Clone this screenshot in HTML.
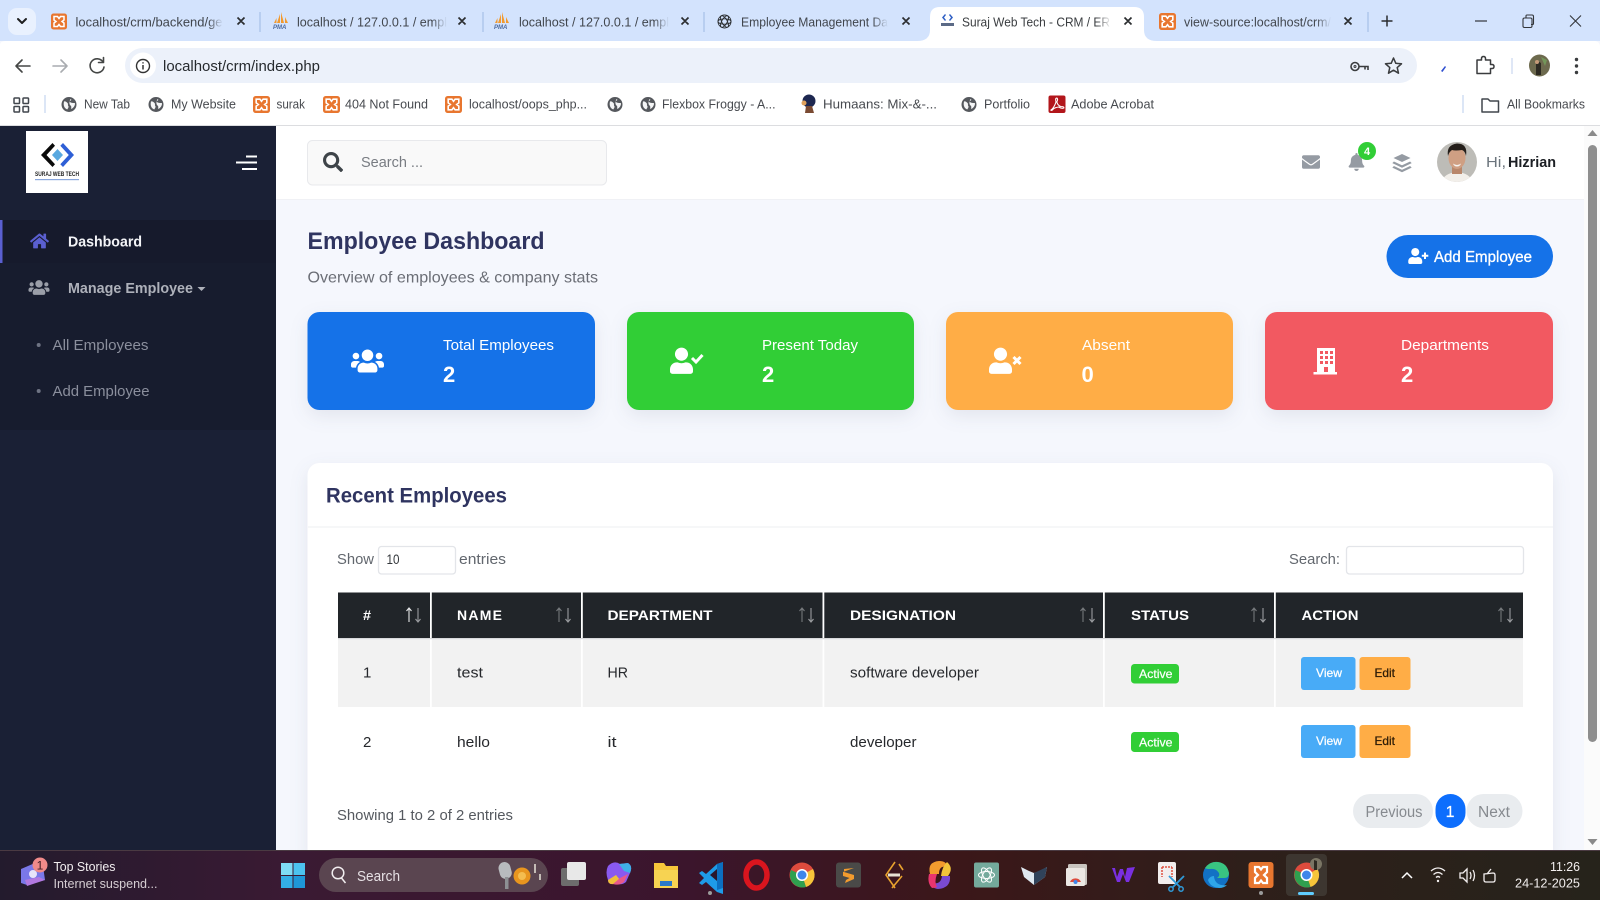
<!DOCTYPE html>
<html lang="en"><head><meta charset="utf-8"><title>Suraj Web Tech - CRM / ERP</title>
<style>
html,body{margin:0;padding:0;width:1600px;height:900px;overflow:hidden;background:#f5f7fd}
svg{display:block;filter:blur(.3px)}
text{font-family:"Liberation Sans",sans-serif}
.t{font-size:12.5px;fill:#41464d}.b{font-size:12.5px;fill:#474a4f}
.lab{font-size:15px;fill:#fff}.num{font-size:22px;font-weight:700;fill:#fff}
.th{font-size:14px;font-weight:700;fill:#fff}.td{font-size:15px;fill:#26282c}
.mut{font-size:15px;fill:#62676e}.bad{font-size:12px;fill:#fff;stroke:#fff;stroke-width:.2}
.btn{font-size:12px;stroke-width:.25}
.pg{font-size:15.5px;fill:#868a8f}
.sh{filter:drop-shadow(0 6px 9px rgba(40,50,90,.09))}
.ck{fill:none;stroke:#454746;stroke-width:1.6;stroke-linecap:round;stroke-linejoin:round}
</style></head><body>
<svg xmlns="http://www.w3.org/2000/svg" width="1600" height="900" viewBox="0 0 1600 900">
<defs>
<linearGradient id="fb"><stop offset="0" stop-color="#d3e3fd" stop-opacity="0"/><stop offset="1" stop-color="#d3e3fd"/></linearGradient>
<linearGradient id="fw"><stop offset="0" stop-color="#fff" stop-opacity="0"/><stop offset="1" stop-color="#fff"/></linearGradient>
<linearGradient id="tb"><stop offset="0" stop-color="#231b2d"/><stop offset=".18" stop-color="#3a1a33"/><stop offset=".42" stop-color="#3b152d"/><stop offset=".6" stop-color="#3b1719"/><stop offset=".78" stop-color="#2e1f1a"/><stop offset="1" stop-color="#26231b"/></linearGradient>
<symbol id="users" viewBox="0 0 640 512"><path d="M96 224c35.3 0 64-28.7 64-64s-28.7-64-64-64-64 28.7-64 64 28.7 64 64 64zm448 0c35.3 0 64-28.7 64-64s-28.7-64-64-64-64 28.7-64 64 28.7 64 64 64zm32 32h-64c-17.6 0-33.5 7.1-45.1 18.6 40.3 22.1 68.9 62 75.1 109.4h66c17.7 0 32-14.3 32-32v-32c0-35.3-28.7-64-64-64zm-256 0c61.9 0 112-50.1 112-112S381.9 32 320 32 208 82.1 208 144s50.1 112 112 112zm76.8 32h-8.3c-20.8 10-43.9 16-68.5 16s-47.6-6-68.5-16h-8.3C179.6 288 128 339.6 128 403.2V432c0 26.5 21.5 48 48 48h288c26.5 0 48-21.5 48-48v-28.8c0-63.6-51.6-115.2-115.2-115.2zm-223.7-13.4C161.5 263.1 145.6 256 128 256H64c-35.3 0-64 28.7-64 64v32c0 17.7 14.3 32 32 32h65.9c6.3-47.4 34.9-87.3 75.2-109.4z"/></symbol>
<symbol id="user" viewBox="0 0 448 512"><path d="M224 256c70.7 0 128-57.3 128-128S294.7 0 224 0 96 57.3 96 128s57.3 128 128 128zm89.6 32h-16.7c-22.2 10.2-46.9 16-72.9 16s-50.6-5.8-72.9-16h-16.7C60.2 288 0 348.2 0 422.4V464c0 26.5 21.5 48 48 48h352c26.5 0 48-21.5 48-48v-41.6c0-74.2-60.2-134.4-134.4-134.4z"/></symbol>
<symbol id="home" viewBox="0 0 576 512"><path d="M280.37 148.26L96 300.11V464a16 16 0 0 0 16 16l112.06-.29a16 16 0 0 0 15.92-16V368a16 16 0 0 1 16-16h64a16 16 0 0 1 16 16v95.64a16 16 0 0 0 16 16.05L464 480a16 16 0 0 0 16-16V300L295.67 148.26a12.19 12.19 0 0 0-15.3 0zM571.6 251.47L488 182.56V44.05a12 12 0 0 0-12-12h-56a12 12 0 0 0-12 12v72.61L318.47 43a48 48 0 0 0-61 0L4.34 251.47a12 12 0 0 0-1.6 16.9l25.5 31A12 12 0 0 0 45.15 301l235.22-193.74a12.19 12.19 0 0 1 15.3 0L530.9 301a12 12 0 0 0 16.9-1.6l25.5-31a12 12 0 0 0-1.7-16.93z"/></symbol>
<symbol id="search" viewBox="0 0 512 512"><path d="M505 442.7L405.3 343c-4.5-4.5-10.6-7-17-7H372c27.6-35.3 44-79.7 44-128C416 93.1 322.9 0 208 0S0 93.1 0 208s93.1 208 208 208c48.3 0 92.7-16.4 128-44v16.3c0 6.4 2.5 12.5 7 17l99.7 99.7c9.4 9.4 24.6 9.4 33.9 0l28.3-28.3c9.4-9.4 9.4-24.6.1-34zM208 336c-70.7 0-128-57.2-128-128 0-70.7 57.2-128 128-128 70.7 0 128 57.2 128 128 0 70.7-57.2 128-128 128z"/></symbol>
<symbol id="mail" viewBox="0 0 512 512"><path d="M502.3 190.8c3.9-3.1 9.7-.2 9.7 4.7V400c0 26.5-21.5 48-48 48H48c-26.5 0-48-21.5-48-48V195.6c0-5 5.7-7.8 9.7-4.7 22.4 17.4 52.1 39.5 154.1 113.6 21.1 15.4 56.7 47.8 92.2 47.6 35.7.3 72-32.8 92.3-47.6 102-74.1 131.6-96.3 154-113.7zM256 320c23.2.4 56.6-29.2 73.4-41.4 132.7-96.3 142.8-104.7 173.4-128.7 5.8-4.5 9.2-11.5 9.2-18.9v-19c0-26.5-21.5-48-48-48H48C21.5 64 0 85.5 0 112v19c0 7.4 3.4 14.3 9.2 18.9 30.6 23.9 40.7 32.4 173.4 128.7 16.8 12.2 50.2 41.8 73.4 41.4z"/></symbol>
<symbol id="bell" viewBox="0 0 448 512"><path d="M224 512c35.32 0 63.97-28.65 63.97-64H160.03c0 35.35 28.65 64 63.97 64zm215.39-149.71c-19.32-20.76-55.47-51.99-55.47-154.29 0-77.7-54.48-139.9-127.94-155.16V32c0-17.67-14.32-32-31.98-32s-31.98 14.33-31.98 32v20.84C118.56 68.1 64.08 130.3 64.08 208c0 102.3-36.15 133.53-55.47 154.29-6 6.45-8.66 14.16-8.61 21.71.11 16.4 12.98 32 32.1 32h383.8c19.12 0 32-15.6 32.1-32 .05-7.55-2.61-15.27-8.61-21.71z"/></symbol>
<symbol id="xmp" viewBox="0 0 16 16"><rect width="16" height="16" rx="2.5" fill="#e8762f"/><path d="M3 3h3.500L8 5l1.500-2H13v3.500L11 8l2 1.500V13H9.500L8 11l-1.500 2H3V9.500L5 8 3 6.500z" fill="none" stroke="#fff" stroke-width="1.500"/></symbol>
<symbol id="globe" viewBox="0 0 16 16"><circle cx="8" cy="8" r="7.500" fill="#55585d"/><path d="M3 5c1.500-.5 2.500.5 3.500 1.500s0 2 .8 3-.5 2.500-1 3.500C3.500 12 2 9 3 5zM9.500 2.500c1.500.5.7 1.500-.5 2S10 6.500 12 6.500s2 0 2 .8c0 2-1.800 4.500-3.700 5.200-.3-1.500.5-2.500-.8-3.500S8 5.500 9.500 2.500z" fill="#f4f5f6"/></symbol>
<symbol id="pma" viewBox="0 0 18 18"><path d="M9 0l3 11H9zM8 2L5 11h3zM13 5l3 6h-3zM4.500 6L2 11h2.500z" fill="#f29a2e"/><text x="1" y="17" font-size="6" font-weight="700" font-style="italic" fill="#4d6a9c">PMA</text></symbol>
</defs>

<!-- Browser tab strip -->
<rect width="1600" height="41" fill="#d3e3fd"/>
<rect x="8" y="8" width="28" height="27" rx="9" fill="#e9f1fe"/>
<path class="ck" style="stroke:#1f1f1f;stroke-width:2" d="M18 19l4 4 4-4"/>
<path d="M0 45Q0 41 6 41H917Q930 41 930 30V17Q930 7 940 7H1134Q1144 7 1144 17V30Q1144 41 1157 41H1594Q1600 41 1600 47V130H0Z" fill="#fff"/>
<g fill="none" stroke="#aac4ea" stroke-width="1.300"><path d="M260 12v20M483 12v20M704 12v20M1368 12v20"/></g>
<use href="#xmp" x="51" y="13" width="16" height="17"/>
<text class="t" x="75.500" y="26.500" textLength="147" lengthAdjust="spacingAndGlyphs">localhost/crm/backend/ge</text><rect x="208" y="12" width="15" height="20" fill="url(#fb)"/>
<use href="#pma" x="272" y="12" width="18" height="18"/>
<text class="t" x="297" y="26.500" textLength="150" lengthAdjust="spacingAndGlyphs">localhost / 127.0.0.1 / empl</text><rect x="432" y="12" width="15" height="20" fill="url(#fb)"/>
<use href="#pma" x="493" y="12" width="18" height="18"/>
<text class="t" x="519" y="26.500" textLength="150" lengthAdjust="spacingAndGlyphs">localhost / 127.0.0.1 / empl</text><rect x="654" y="12" width="15" height="20" fill="url(#fb)"/>
<g transform="translate(724.500 21.500)" fill="none" stroke="#2a2d30" stroke-width=".9"><circle r="6.500"/><ellipse rx="6.500" ry="2.700"/><ellipse rx="6.500" ry="2.700" transform="rotate(60)"/><ellipse rx="6.500" ry="2.700" transform="rotate(120)"/></g>
<text class="t" x="741" y="26.500" textLength="147" lengthAdjust="spacingAndGlyphs">Employee Management Da</text><rect x="873" y="12" width="15" height="20" fill="url(#fb)"/>
<path d="M945 14l-3 3.500 3 3.500 1-1-2-2.500 2-2.500zM950 14l3 3.500-3 3.500-1-1 2-2.500-2-2.500z" fill="#2f5fc4"/><rect x="941" y="23" width="13" height="3" fill="#5b6a86"/>
<text class="t" style="fill:#3a3d40" x="962" y="26.500" textLength="148" lengthAdjust="spacingAndGlyphs">Suraj Web Tech - CRM / ER</text><rect x="1096" y="12" width="15" height="20" fill="url(#fw)"/>
<use href="#xmp" x="1159" y="13" width="17" height="17"/>
<text class="t" x="1184" y="26.500" textLength="147" lengthAdjust="spacingAndGlyphs">view-source:localhost/crm/</text><rect x="1316" y="12" width="15" height="20" fill="url(#fb)"/>
<g fill="none" stroke="#2b2d30" stroke-width="1.700"><path d="M237.500 17.500l7 7M244.500 17.500l-7 7M458.500 17.500l7 7M465.500 17.500l-7 7M681.500 17.500l7 7M688.500 17.500l-7 7M902.500 17.500l7 7M909.500 17.500l-7 7M1124.500 17.500l7 7M1131.500 17.500l-7 7M1344.500 17.500l7 7M1351.500 17.500l-7 7"/></g>
<path d="M1387 15.500v11M1381.500 21h11" stroke="#2b2d30" stroke-width="1.500"/>
<path d="M1475 21h12" stroke="#33363a" stroke-width="1.200"/>
<g fill="none" stroke="#33363a" stroke-width="1.100"><rect x="1523" y="18" width="9" height="9.500" rx="1.500"/><path d="M1526 18v-2q0-1 1-1h5q1.500 0 1.500 1.500v7q0 1-1 1h-1.500"/><path d="M1570 15.500l11 11M1581 15.500l-11 11"/></g>

<!-- Toolbar -->
<rect x="125" y="48" width="1292" height="35" rx="17.500" fill="#ecf1fa"/>
<circle cx="143" cy="65.500" r="13" fill="#fff"/>
<path class="ck" d="M30 66H16M22 60l-6 6 6 6"/>
<path class="ck" style="stroke:#a9acb0" d="M67 66H53M61 60l6 6-6 6"/>
<path class="ck" d="M103 62a7 7 0 1 0 1 5M103.500 57.500v5h-5"/>
<circle cx="143" cy="66" r="6.500" fill="none" stroke="#333" stroke-width="1.400"/><path d="M143 65v4.500M143 62.300v1.200" stroke="#333" stroke-width="1.500"/>
<text x="163" y="71" font-size="15" fill="#262a2e" textLength="157" lengthAdjust="spacingAndGlyphs">localhost/crm/index.php</text>
<g fill="none" stroke="#3a3c3e" stroke-width="1.600"><circle cx="1355" cy="66.500" r="4"/><circle cx="1355" cy="66.500" r="1" stroke-width="1"/><path d="M1359 66.500h9v3.500M1365 67v2.500"/></g>
<path d="M1393.500 58l2.300 5.300 5.700.5-4.300 3.800 1.300 5.600-5-3-5 3 1.300-5.600-4.300-3.800 5.700-.5z" fill="none" stroke="#3a3c3e" stroke-width="1.500" stroke-linejoin="round"/>
<path d="M1441 71l4-5 1 1-3.500 5z" fill="#2f4fd0"/>
<path d="M1477 60h4.500v-1.500q0-2 2-2t2 2V60h5v4.500h1.500q2 0 2 2t-2 2h-1.500v5H1477z" class="ck" style="stroke-width:1.500;stroke:#3a3c3e"/>
<path d="M1512 58v16" stroke="#c9d7ef" stroke-width="1.200"/>
<ellipse cx="1539.500" cy="65.500" rx="10.500" ry="11" fill="#6d6a4e"/><path d="M1536 60l5 3v12h-5z" fill="#2d2a22"/><path d="M1541 57l6 3-2 6z" fill="#73965a"/><circle cx="1537" cy="62" r="2" fill="#c59a78"/>
<g fill="#3a3c3e"><circle cx="1576.500" cy="59.500" r="1.700"/><circle cx="1576.500" cy="66" r="1.700"/><circle cx="1576.500" cy="72.500" r="1.700"/></g>

<!-- Bookmarks -->
<g fill="none" stroke="#41464d" stroke-width="1.500"><rect x="14" y="98" width="5.500" height="5.500" rx=".8"/><rect x="23" y="98" width="5.500" height="5.500" rx=".8"/><rect x="14" y="106.500" width="5.500" height="5.500" rx=".8"/><rect x="23" y="106.500" width="5.500" height="5.500" rx=".8"/></g>
<path d="M45 95v18M1463 95v18" stroke="#c5d6ef" stroke-width="1.200"/>
<use href="#globe" x="61" y="96.500" width="16" height="16"/><text class="b" x="84" y="108.500" textLength="46" lengthAdjust="spacingAndGlyphs">New Tab</text>
<use href="#globe" x="148" y="96.500" width="16" height="16"/><text class="b" x="171" y="108.500" textLength="65" lengthAdjust="spacingAndGlyphs">My Website</text>
<use href="#xmp" x="253" y="96" width="17" height="17"/><text class="b" x="276.500" y="108.500" textLength="28.500" lengthAdjust="spacingAndGlyphs">surak</text>
<use href="#xmp" x="323" y="96" width="17" height="17"/><text class="b" x="345" y="108.500" textLength="83" lengthAdjust="spacingAndGlyphs">404 Not Found</text>
<use href="#xmp" x="445" y="96" width="17" height="17"/><text class="b" x="469" y="108.500" textLength="118" lengthAdjust="spacingAndGlyphs">localhost/oops_php...</text>
<use href="#globe" x="607" y="96.500" width="16" height="16"/>
<use href="#globe" x="640" y="96.500" width="16" height="16"/><text class="b" x="662" y="108.500" textLength="113.500" lengthAdjust="spacingAndGlyphs">Flexbox Froggy - A...</text>
<circle cx="809" cy="101" r="6.500" fill="#1d2750"/><path d="M806 106h6l2 7h-9z" fill="#7a4a32"/><circle cx="804" cy="103" r="2.500" fill="#e0a15b"/>
<text class="b" x="823" y="108.500" textLength="114" lengthAdjust="spacingAndGlyphs">Humaans: Mix-&amp;-...</text>
<use href="#globe" x="961" y="96.500" width="16" height="16"/><text class="b" x="984" y="108.500" textLength="46" lengthAdjust="spacingAndGlyphs">Portfolio</text>
<rect x="1048.500" y="95.500" width="17" height="17.500" rx="2" fill="#b2161b"/><path d="M1051 110q3-2 5-8-1-4 .8-4 1.500 1 0 4 1 3.500 4 4.500 3.500 0 3 1.500-2 1-5-1-4 .5-5.500 2-2 2.500-2.300 .5z" fill="none" stroke="#fff" stroke-width="1.100"/>
<text class="b" x="1071" y="108.500" textLength="83" lengthAdjust="spacingAndGlyphs">Adobe Acrobat</text>
<path d="M1482 99h6l2 2h8.500v11H1482z" fill="none" stroke="#41464d" stroke-width="1.500" stroke-linejoin="round"/>
<text class="b" x="1507" y="108.500" textLength="78" lengthAdjust="spacingAndGlyphs">All Bookmarks</text>
<rect y="125" width="1600" height="1.200" fill="#dcdde0"/>

<!-- Page bg -->
<rect x="276" y="126" width="1310" height="725" fill="#f5f7fd"/>
<rect x="1584" y="126" width="16" height="725" fill="#fbfbfb"/>

<!-- Sidebar -->
<rect y="126" width="276" height="725" fill="#1a2035"/>
<rect y="220" width="276" height="43" fill="#161a2c"/>
<rect y="220" width="2.500" height="43" fill="#5a5fd0"/>
<rect y="263" width="276" height="167" fill="#171c2e"/>
<rect x="26" y="131" width="62" height="62" fill="#fff"/>
<path d="M52.500 143L41 155l11.500 12 2.500-2.700L46.500 155l8.500-9.300z" fill="#0a0a0a"/>
<path d="M63 143l11 12-11 12-2.700-2.700 8.500-9.300-8.500-9.300z" fill="#2e5fd6"/>
<path d="M57.500 149l5.500 6-5.500 6-5.500-6z" fill="#5aa9e0"/>
<text x="35" y="176" font-size="6.500" font-weight="700" fill="#222" textLength="44" lengthAdjust="spacingAndGlyphs">SURAJ WEB TECH</text>
<rect x="35" y="179" width="44" height="1.200" fill="#8aa7dd"/>
<path d="M246 156.500h11M236 162.500h21M242 169h15" stroke="#fff" stroke-width="2"/>
<use href="#home" x="30" y="232.500" width="19" height="17" fill="#5a5fd0"/>
<text x="68" y="246.500" font-size="15" font-weight="700" fill="#f3f4f7" textLength="74" lengthAdjust="spacingAndGlyphs">Dashboard</text>
<use href="#users" x="28.500" y="279" width="21" height="17" fill="#9a9ea8"/>
<text x="68" y="293" font-size="15" font-weight="700" fill="#aeb1ba" textLength="125" lengthAdjust="spacingAndGlyphs">Manage Employee</text>
<path d="M197.500 287h8l-4 4z" fill="#aeb1ba"/>
<circle cx="38.700" cy="345" r="2" fill="#6e7383"/><circle cx="38.700" cy="391" r="2" fill="#6e7383"/>
<text x="52.500" y="350" font-size="15" fill="#8b8f9d" textLength="96" lengthAdjust="spacingAndGlyphs">All Employees</text>
<text x="52.500" y="396" font-size="15" fill="#8b8f9d" textLength="97" lengthAdjust="spacingAndGlyphs">Add Employee</text>

<!-- Top nav -->
<rect x="276" y="126" width="1310" height="73" fill="#fff"/>
<rect x="276" y="199" width="1310" height="1" fill="#f0f1f5"/>
<rect x="307.500" y="140.500" width="299" height="44.500" rx="5" fill="#f9f9f9" stroke="#e8e9ec"/>
<use href="#search" x="323" y="152" width="20" height="20" fill="#3e4449"/>
<text x="361" y="167" font-size="15" fill="#787c82" textLength="62" lengthAdjust="spacingAndGlyphs">Search ...</text>
<use href="#mail" x="1302" y="153" width="18" height="18" fill="#959ba3"/>
<use href="#bell" x="1348.500" y="153" width="16" height="18" fill="#959ba3"/>
<circle cx="1367" cy="151" r="9" fill="#31ce36"/><text x="1367" y="155" font-size="11" font-weight="700" fill="#fff" text-anchor="middle">4</text>
<path d="M1402 154l8.500 4-8.500 4-8.500-4z" fill="#959ba3"/><path d="M1394 162l8 3.700 8-3.700 1 1-9 4.300-9-4.300zM1394 166.500l8 3.700 8-3.700 1 1-9 4.300-9-4.300z" fill="#959ba3" stroke="#959ba3" stroke-width=".8"/>
<clipPath id="av"><circle cx="1457" cy="162" r="20"/></clipPath>
<g clip-path="url(#av)"><rect x="1437" y="142" width="40" height="40" fill="#bdbcb7"/><path d="M1441 184q2-11 16-12 14 1 16 12z" fill="#f2efea"/><rect x="1452" y="164" width="10" height="10" fill="#b9876b"/><ellipse cx="1457" cy="158" rx="8.500" ry="11" fill="#cf9f83"/><path d="M1448 156q-2-11 9-12.500 11 0 9 12.500-1-5-4-6-7 1-10 0-3 2-4 6z" fill="#241e1a"/><path d="M1453 163.500q4 3 8 0-1 3-4 3t-4-3z" fill="#f7f3ef"/></g>
<text x="1486" y="167" font-size="15" fill="#6c757d" textLength="20" lengthAdjust="spacingAndGlyphs">Hi,</text>
<text x="1508" y="167" font-size="15" font-weight="700" fill="#1c1f24" textLength="48" lengthAdjust="spacingAndGlyphs">Hizrian</text>

<!-- Header -->
<text x="307.500" y="249" font-size="24" font-weight="700" fill="#2f3460" textLength="237" lengthAdjust="spacingAndGlyphs">Employee Dashboard</text>
<text x="307.500" y="282.500" font-size="16" fill="#6b6e76" textLength="290.500" lengthAdjust="spacingAndGlyphs">Overview of employees &amp; company stats</text>
<rect x="1386.500" y="235" width="166.500" height="43" rx="21.500" fill="#1572e8"/>
<use href="#user" x="1408" y="248" width="14.500" height="16" fill="#fff"/>
<path d="M1425 252.500v6.500M1421.800 255.800h6.500" stroke="#fff" stroke-width="2"/>
<text x="1434" y="262" font-size="16" fill="#fff" stroke="#fff" stroke-width=".35" textLength="98" lengthAdjust="spacingAndGlyphs">Add Employee</text>

<!-- Stat cards -->
<rect class="sh" x="307.500" y="312" width="287.500" height="98" rx="12" fill="#1572e8"/>
<rect class="sh" x="627" y="312" width="287" height="98" rx="12" fill="#31ce36"/>
<rect class="sh" x="946" y="312" width="287" height="98" rx="12" fill="#ffad46"/>
<rect class="sh" x="1265" y="312" width="288" height="98" rx="12" fill="#f25961"/>
<use href="#users" x="351" y="347" width="33" height="28" fill="#fff"/>
<use href="#user" x="670" y="347.500" width="23" height="26.500" fill="#fff"/><path d="M692 358l4 4 6.500-7" fill="none" stroke="#fff" stroke-width="3"/>
<use href="#user" x="989" y="347.500" width="23" height="26.500" fill="#fff"/><path d="M1013.500 357l7 7M1020.500 357l-7 7" fill="none" stroke="#fff" stroke-width="3"/>
<path fill-rule="evenodd" fill="#fff" d="M1316 348h18v24h2v2.500h-23.500V372h3.500zM1319 351v3h3v-3zM1324 351v3h3v-3zM1329 351v3h3v-3zM1319 356v3h3v-3zM1324 356v3h3v-3zM1329 356v3h3v-3zM1319 361v3h3v-3zM1324 361v3h3v-3zM1329 361v3h3v-3zM1323 367v5h4v-5z" transform="translate(1 0)"/>
<text class="lab" x="443" y="350" textLength="111" lengthAdjust="spacingAndGlyphs">Total Employees</text><text class="num" x="443" y="382">2</text>
<text class="lab" x="762" y="350" textLength="96" lengthAdjust="spacingAndGlyphs">Present Today</text><text class="num" x="762" y="382">2</text>
<text class="lab" x="1082" y="350" textLength="48" lengthAdjust="spacingAndGlyphs">Absent</text><text class="num" x="1081.500" y="382">0</text>
<text class="lab" x="1401" y="350" textLength="88" lengthAdjust="spacingAndGlyphs">Departments</text><text class="num" x="1401" y="382">2</text>

<!-- Table card -->
<rect class="sh" x="307.500" y="463" width="1245.500" height="400" rx="12" fill="#fff"/>
<text x="326" y="502.500" font-size="21" font-weight="700" fill="#2f3460" textLength="181" lengthAdjust="spacingAndGlyphs">Recent Employees</text>
<rect x="308" y="526.500" width="1245" height="1" fill="#eeeff2"/>
<text class="mut" x="337" y="564" textLength="37" lengthAdjust="spacingAndGlyphs">Show</text>
<rect x="378.500" y="546.500" width="77" height="27.500" rx="3" fill="#fff" stroke="#e3e5e9" stroke-width="1.300"/>
<text x="386.500" y="564" font-size="13.500" fill="#33373b" textLength="13" lengthAdjust="spacingAndGlyphs">10</text>
<text class="mut" x="459" y="564" textLength="47" lengthAdjust="spacingAndGlyphs">entries</text>
<text class="mut" x="1289" y="564" textLength="51" lengthAdjust="spacingAndGlyphs">Search:</text>
<rect x="1346.500" y="546.500" width="177" height="27.500" rx="3" fill="#fff" stroke="#e3e5e9" stroke-width="1.300"/>

<rect x="338" y="592.500" width="1185" height="46" fill="#212529"/>
<rect x="338" y="639" width="1185" height="68" fill="#f2f2f2"/>
<g fill="#fff"><rect x="430" y="592" width="1.800" height="115"/><rect x="581" y="592" width="1.800" height="115"/><rect x="822.500" y="592" width="1.800" height="115"/><rect x="1103" y="592" width="1.800" height="115"/><rect x="1274" y="592" width="1.800" height="115"/></g>
<rect x="338" y="638" width="1185" height="1.200" fill="#d8d9db"/>
<text class="th" x="363" y="620" textLength="8" lengthAdjust="spacingAndGlyphs">#</text>
<text class="th" x="457" y="620" textLength="45" lengthAdjust="spacing">NAME</text>
<text class="th" x="607.500" y="620" textLength="105" lengthAdjust="spacingAndGlyphs">DEPARTMENT</text>
<text class="th" x="850" y="620" textLength="106" lengthAdjust="spacingAndGlyphs">DESIGNATION</text>
<text class="th" x="1131" y="620" textLength="58" lengthAdjust="spacingAndGlyphs">STATUS</text>
<text class="th" x="1301.500" y="620" textLength="57" lengthAdjust="spacingAndGlyphs">ACTION</text>
<g fill="none" stroke-width="1.100">
<path stroke="#e6e7e8" d="M409 622v-14M406.500 611l2.500-3 2.500 3"/><path stroke="#9a9c9f" d="M418 608v14M415.500 619l2.500 3 2.500-3"/>
<path stroke="#74777a" d="M559 622v-14M556.500 611l2.500-3 2.500 3M802 622v-14M799.500 611l2.500-3 2.500 3M1083 622v-14M1080.500 611l2.500-3 2.500 3M1254 622v-14M1251.500 611l2.500-3 2.500 3M1501 622v-14M1498.500 611l2.500-3 2.500 3"/>
<path stroke="#9a9c9f" d="M568 608v14M565.500 619l2.500 3 2.500-3M811 608v14M808.500 619l2.500 3 2.500-3M1092 608v14M1089.500 619l2.500 3 2.500-3M1263 608v14M1260.500 619l2.500 3 2.500-3M1510 608v14M1507.500 619l2.500 3 2.500-3"/>
</g>
<text class="td" x="363" y="677.500">1</text>
<text class="td" x="457" y="677.500" textLength="26" lengthAdjust="spacingAndGlyphs">test</text>
<text class="td" x="607.500" y="677.500" textLength="20.500" lengthAdjust="spacingAndGlyphs">HR</text>
<text class="td" x="850" y="677.500" textLength="129" lengthAdjust="spacingAndGlyphs">software developer</text>
<text class="td" x="363" y="747">2</text>
<text class="td" x="457" y="747" textLength="33" lengthAdjust="spacingAndGlyphs">hello</text>
<text class="td" x="607.500" y="747" textLength="9" lengthAdjust="spacingAndGlyphs">it</text>
<text class="td" x="850" y="747" textLength="66.500" lengthAdjust="spacingAndGlyphs">developer</text>

<rect x="1131" y="664" width="48" height="19.500" rx="3.500" fill="#31ce36"/><text class="bad" x="1139" y="678" textLength="33.500" lengthAdjust="spacingAndGlyphs">Active</text>
<rect x="1131" y="732" width="48" height="20" rx="3.500" fill="#31ce36"/><text class="bad" x="1139" y="746.500" textLength="33.500" lengthAdjust="spacingAndGlyphs">Active</text>
<rect x="1301" y="657" width="54.500" height="33" rx="3" fill="#48abf7"/><text class="btn" fill="#fff" stroke="#fff" x="1316" y="677" textLength="26" lengthAdjust="spacingAndGlyphs">View</text>
<rect x="1359.500" y="657" width="51" height="33" rx="3" fill="#ffad46"/><text class="btn" fill="#2c1b06" stroke="#2c1b06" x="1374.500" y="677" textLength="20.500" lengthAdjust="spacingAndGlyphs">Edit</text>
<rect x="1301" y="725" width="54.500" height="33" rx="3" fill="#48abf7"/><text class="btn" fill="#fff" stroke="#fff" x="1316" y="745" textLength="26" lengthAdjust="spacingAndGlyphs">View</text>
<rect x="1359.500" y="725" width="51" height="33" rx="3" fill="#ffad46"/><text class="btn" fill="#2c1b06" stroke="#2c1b06" x="1374.500" y="745" textLength="20.500" lengthAdjust="spacingAndGlyphs">Edit</text>

<text x="337" y="820" font-size="15" fill="#55595f" textLength="176" lengthAdjust="spacingAndGlyphs">Showing 1 to 2 of 2 entries</text>
<rect x="1353" y="794" width="80" height="34" rx="17" fill="#e9ecef"/><text class="pg" x="1365.500" y="817" textLength="57" lengthAdjust="spacingAndGlyphs">Previous</text>
<rect x="1435.500" y="794" width="30" height="34" rx="15" fill="#0d6efd"/><text x="1450" y="817" font-size="15.500" fill="#fff" stroke="#fff" stroke-width=".3" text-anchor="middle">1</text>
<rect x="1466.500" y="794" width="56" height="34" rx="17" fill="#e9ecef"/><text class="pg" x="1478" y="817" textLength="32" lengthAdjust="spacingAndGlyphs">Next</text>

<!-- Scrollbar -->
<rect x="1584" y="126" width="16" height="725" fill="#fbfbfb"/>
<path d="M1592.500 130l5 6h-10z" fill="#8a8a8a"/>
<rect x="1588" y="145" width="9" height="597" rx="4.500" fill="#8e8e8e"/>
<path d="M1592.500 845l-5-6h10z" fill="#8a8a8a"/>

<!-- Taskbar -->
<rect y="850" width="1600" height="50" fill="url(#tb)"/>
<rect y="850" width="1600" height="1" fill="#4a3a42"/>
<path d="M21 869l14-6 8 3 2 14-18 5-6-2z" fill="#7a78e8"/><path d="M25 880l14-3 6 3-18 6z" fill="#b278e0"/><circle cx="33" cy="874" r="4" fill="#e8e4fa"/>
<circle cx="40" cy="865" r="7.500" fill="#f08a8a"/><text x="40" y="869.500" font-size="12" fill="#3a1a22" text-anchor="middle">1</text>
<text x="53.500" y="871" font-size="13" fill="#f2eef0" textLength="62" lengthAdjust="spacingAndGlyphs">Top Stories</text>
<text x="53.500" y="888" font-size="13" fill="#d5cdd2" textLength="104" lengthAdjust="spacingAndGlyphs">Internet suspend...</text>
<g><rect x="281" y="863" width="11.500" height="12" fill="#7fdcf5"/><rect x="293.500" y="863" width="11.500" height="12" fill="#4cc3ef"/><rect x="281" y="876" width="11.500" height="12" fill="#33aee6"/><rect x="293.500" y="876" width="11.500" height="12" fill="#1e97d8"/></g>
<rect x="319" y="858" width="229" height="34" rx="17" fill="#5a4550"/>
<circle cx="338" cy="873" r="5.800" fill="none" stroke="#f2eef0" stroke-width="1.500"/><path d="M341.500 878l4 5" stroke="#f2eef0" stroke-width="1.500"/>
<text x="357" y="881" font-size="14.500" fill="#e6e0e4" textLength="43" lengthAdjust="spacingAndGlyphs">Search</text>
<rect x="499" y="862" width="12" height="17" rx="6" transform="rotate(-15 505 870)" fill="#b8bbbe"/><rect x="505" y="877" width="3.500" height="12" fill="#8d9093"/>
<circle cx="522" cy="876" r="8.500" fill="#e8951e"/><circle cx="522" cy="876" r="4" fill="#f4bd4f"/>
<path d="M535 864v9M540 874v6" stroke="#e8e4d8" stroke-width="1.500"/>
<rect x="561" y="868" width="18" height="18" rx="2" fill="#6d6d6d"/><rect x="567" y="862" width="19" height="18" rx="2" fill="#e8e8e8"/>
<path d="M608 866q6-6 12-2l8-1q5 3 2 10l-4 9q-5 4-11 1-6 3-7-3-3-8 0-14z" fill="#8a5af0"/><path d="M619 864l9-1q5 3 2 10l-6-2z" fill="#3fb0e8"/><path d="M608 880q0 5 6 4l6-4-4-5z" fill="#f0c03c"/><path d="M613 884q6 2 11-2l4-8-8 4z" fill="#e85a8a"/>
<path d="M654 863h10l2 3h12v22h-24z" fill="#f7c63a"/><rect x="654" y="870" width="24" height="18" fill="#f7d352"/><rect x="660" y="881" width="12" height="5" fill="#2a79c9"/>
<g transform="translate(5 0)"><path d="M718 862l-6 2-11 10-4-3-3 2 5 5-5 5 3 2 4-3 11 10 6 2z" fill="#1e9be8"/><path d="M718 862v26l-6 2v-26z" fill="#0c6fc0"/><path d="M712 869l-7 6 7 6z" fill="#2a172c"/></g>
<circle cx="710" cy="893" r="2" fill="#9b9b9b"/>
<ellipse cx="756.500" cy="875" rx="10.500" ry="13" fill="none" stroke="#d9151e" stroke-width="5.500"/>
<circle cx="802" cy="875" r="12.500" fill="#dd4b3d"/><path d="M802 875l11-6a12.500 12.500 0 0 1-7 18z" fill="#f7c53a"/><path d="M802 875l4 12a12.500 12.500 0 0 1-15-17z" fill="#2fa04f"/><circle cx="802" cy="875" r="6" fill="#fff"/><circle cx="802" cy="875" r="4.500" fill="#3f86ea"/>
<rect x="836" y="862.500" width="25" height="25" rx="3" fill="#4a4a48"/><path d="M854 868l-11 4v4l10 3v-3l-7 4-1 3 9-4v-4l-10-3v-3z" fill="#f29b2e"/>
<path d="M895 862l-9 13 9 13M892 888l10-12M899 864l4 6" fill="none" stroke="#e8a22e" stroke-width="1.600"/><path d="M888 875h12" stroke="#e8e2d4" stroke-width="3"/>
<path d="M930 874q-3-12 9-13 8 0 8 6-8-2-8 7z" fill="#f29b2e"/><path d="M947 862q7 6 1 14h-7q1-9 6-14z" fill="#f2c53a"/><path d="M950 876q1 12-12 13-7-1-6-6 9 2 10-7z" fill="#7a4ad0"/><path d="M929 874q-2 9 3 14 3 0 5-1-3-5 0-13z" fill="#e8356e"/>
<rect x="974" y="862.500" width="25" height="25" rx="2" fill="#74aa9c"/><g transform="translate(986.500 875)" fill="none" stroke="#fff" stroke-width="1"><ellipse rx="8" ry="3.500"/><ellipse rx="8" ry="3.500" transform="rotate(60)"/><ellipse rx="8" ry="3.500" transform="rotate(120)"/></g>
<path d="M1021 867l8 4 5 2 6-2 7-4-2 10-11 8-10-8z" fill="#dfe8f0"/><path d="M1034 873l13-6-2 10-11 8z" fill="#30425a"/>
<rect x="1068" y="864" width="19" height="21" rx="1.500" fill="#c9c4bf"/><rect x="1066" y="868" width="19" height="18" rx="1.500" fill="#ece8e4"/><path d="M1070 882a6 6 0 0 1 11 0z" fill="#dd4b3d"/><circle cx="1075.500" cy="882" r="2" fill="#3f86ea"/>
<path d="M1112 868l3 0 2 9 3-8h3l2 8 2-9 8-1-6 15h-3l-3-8-3 8h-3z" fill="#7a2fe0"/>
<rect x="1158" y="862" width="18" height="22" rx="2" fill="#f2eeee"/><path d="M1162 867h10M1162 867v10M1172 867v10" stroke="#e05040" stroke-width="1.500" stroke-dasharray="2 1"/><path d="M1169 876l11 11M1184 876l-12 12" stroke="#2f9ad8" stroke-width="1.800"/><circle cx="1171" cy="889" r="2.200" fill="none" stroke="#2f9ad8" stroke-width="1.500"/><circle cx="1181" cy="889" r="2.200" fill="none" stroke="#2f9ad8" stroke-width="1.500"/>
<circle cx="1216" cy="875" r="13" fill="#1271c4"/><path d="M1205 868q5-7 13-6 9 1 11 11 0 5-5 5h-7q3-2 2-5-3-5-9-4-4 0-5-1z" fill="#39c481"/><path d="M1208 880q2 7 11 8 5 0 8-3-6 1-10-2-3-3-3-7-4 0-6 4z" fill="#2ea5e8"/>
<rect x="1248.500" y="862" width="25" height="26" rx="3" fill="#e8762f"/><path d="M1255 867h4l2 2.500 2-2.500h4v5l-3 3 3 3v5h-4l-2-2.500-2 2.500h-4v-5l3-3-3-3z" fill="none" stroke="#fff" stroke-width="2.200"/>
<circle cx="1261" cy="893" r="2" fill="#9b9b9b"/>
<rect x="1286" y="854" width="41" height="42" rx="4" fill="#3d3630"/>
<circle cx="1306.500" cy="875" r="12.500" fill="#dd4b3d"/><path d="M1306.500 875l11-6a12.500 12.500 0 0 1-7 18z" fill="#f7c53a"/><path d="M1306.500 875l4 12a12.500 12.500 0 0 1-15-17z" fill="#2fa04f"/><circle cx="1306.500" cy="875" r="6" fill="#fff"/><circle cx="1306.500" cy="875" r="4.500" fill="#3f86ea"/>
<circle cx="1316" cy="864" r="6" fill="#7a7564"/><path d="M1314 860l3 1v9h-3z" fill="#2d2a22"/>
<rect x="1298" y="892" width="16" height="3" rx="1.500" fill="#60cdff"/>
<path d="M1402 878l5-5 5 5" fill="none" stroke="#fff" stroke-width="1.500"/>
<g fill="none" stroke="#f2eeee" stroke-width="1.300"><path d="M1431 871q7-6 14 0M1433.500 874.500q4.500-4 9 0M1436 877.500q2-2 4 0"/><path d="M1460 873h3l4-4v13l-4-4h-3zM1470 872q2 3.500 0 7M1473 870q3 5.500 0 11"/><path d="M1484 874l9-1q2 0 2 2v5q0 2-2 2h-7q-2 0-2-2zM1491 869l-4 5"/></g>
<circle cx="1438" cy="881" r="1.200" fill="#f2eeee"/>
<text x="1580" y="871" font-size="13" fill="#f2eeee" text-anchor="end" textLength="30" lengthAdjust="spacingAndGlyphs">11:26</text>
<text x="1580" y="887.500" font-size="13" fill="#f2eeee" text-anchor="end" textLength="65" lengthAdjust="spacingAndGlyphs">24-12-2025</text>
</svg>
</body></html>
